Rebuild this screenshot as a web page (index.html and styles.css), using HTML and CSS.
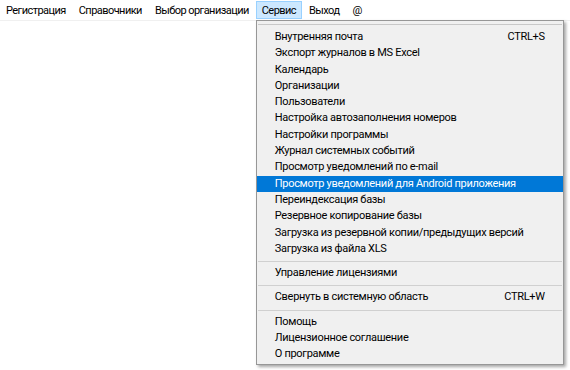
FILE: index.html
```html
<!DOCTYPE html>
<html lang="ru">
<head>
<meta charset="utf-8">
<link rel="stylesheet" href="styles.css">
</head>
<body>
<div class="menubar">
  <div class="mb-item">Регистрация</div>
  <div class="mb-item">Справочники</div>
  <div class="mb-item">Выбор организации</div>
  <div class="mb-item active">Сервис
    <div class="dropdown">
      <div class="topline"></div>
      <div class="dd-list">
        <div class="row"><span>Внутренняя почта</span><span>CTRL+S</span></div>
        <div class="row"><span>Экспорт журналов в MS Excel</span></div>
        <div class="row"><span>Календарь</span></div>
        <div class="row"><span>Организации</span></div>
        <div class="row"><span>Пользователи</span></div>
        <div class="row"><span>Настройка автозаполнения номеров</span></div>
        <div class="row"><span>Настройки программы</span></div>
        <div class="row"><span>Журнал системных событий</span></div>
        <div class="row"><span>Просмотр уведомлений по e-mail</span></div>
        <div class="row sel"><span>Просмотр уведомлений для Android приложения</span></div>
        <div class="row"><span>Переиндексация базы</span></div>
        <div class="row"><span>Резервное копирование базы</span></div>
        <div class="row"><span>Загрузка из резервной копии/предыдущих версий</span></div>
        <div class="row"><span>Загрузка из файла XLS</span></div>
        <div class="sep"></div>
        <div class="row"><span>Управление лицензиями</span></div>
        <div class="sep"></div>
        <div class="row"><span>Свернуть в системную область</span><span>CTRL+W</span></div>
        <div class="sep"></div>
        <div class="row"><span>Помощь</span></div>
        <div class="row"><span>Лицензионное соглашение</span></div>
        <div class="row"><span>О программе</span></div>
      </div>
    </div>
  </div>
  <div class="mb-item">Выход</div>
  <div class="mb-item">@</div>
</div>
</body>
</html>
```

FILE: styles.css
```css
html, body {
  margin: 0;
  padding: 0;
  background: #ffffff;
}
body {
  font-family: Roboto, "Noto Sans", sans-serif;
  font-size: 11px;
  color: #000;
  width: 570px;
  height: 370px;
  overflow: hidden;
}
.menubar {
  display: flex;
  padding: 1px 0 0 0;
  border-bottom: 1px solid #f0f0f0;
  box-sizing: border-box;
  height: 21px;
  letter-spacing: -0.55px;
}
.mb-item {
  padding: 0 5px;
  margin-right: 1px;
  height: 18px;
  line-height: 17px;
  border: 1px solid transparent;
  box-sizing: border-box;
  position: relative;
  white-space: nowrap;
}
.mb-item.active {
  background: #cce8ff;
  border-color: #99d1ff;
}
.dropdown {
  position: absolute;
  left: -1px;
  top: 18px;
  width: 308px;
  height: 345px;
  box-sizing: border-box;
  background: #f0f0f0;
  border: 1px solid #979797;
  box-shadow: 2px 2px 3px rgba(0,0,0,0.35);
  z-index: 10;
  letter-spacing: -0.3px;
}
.topline {
  margin: 3px 1px 0 1px;
  border-top: 1px solid #c8c8c8;
}
.dd-list {
  padding-top: 4px;
}
.row {
  display: flex;
  justify-content: space-between;
  height: 16.3px;
  line-height: 16px;
  padding: 0 18px;
  white-space: nowrap;
}
.row.sel {
  background: #0078d7;
  color: #fff;
}
.sep {
  height: 8px;
  margin: 0 1px;
  box-sizing: border-box;
  padding-top: 4px;
}
.sep::after {
  content: "";
  display: block;
  border-top: 1px solid #d0d0d0;
}
```
